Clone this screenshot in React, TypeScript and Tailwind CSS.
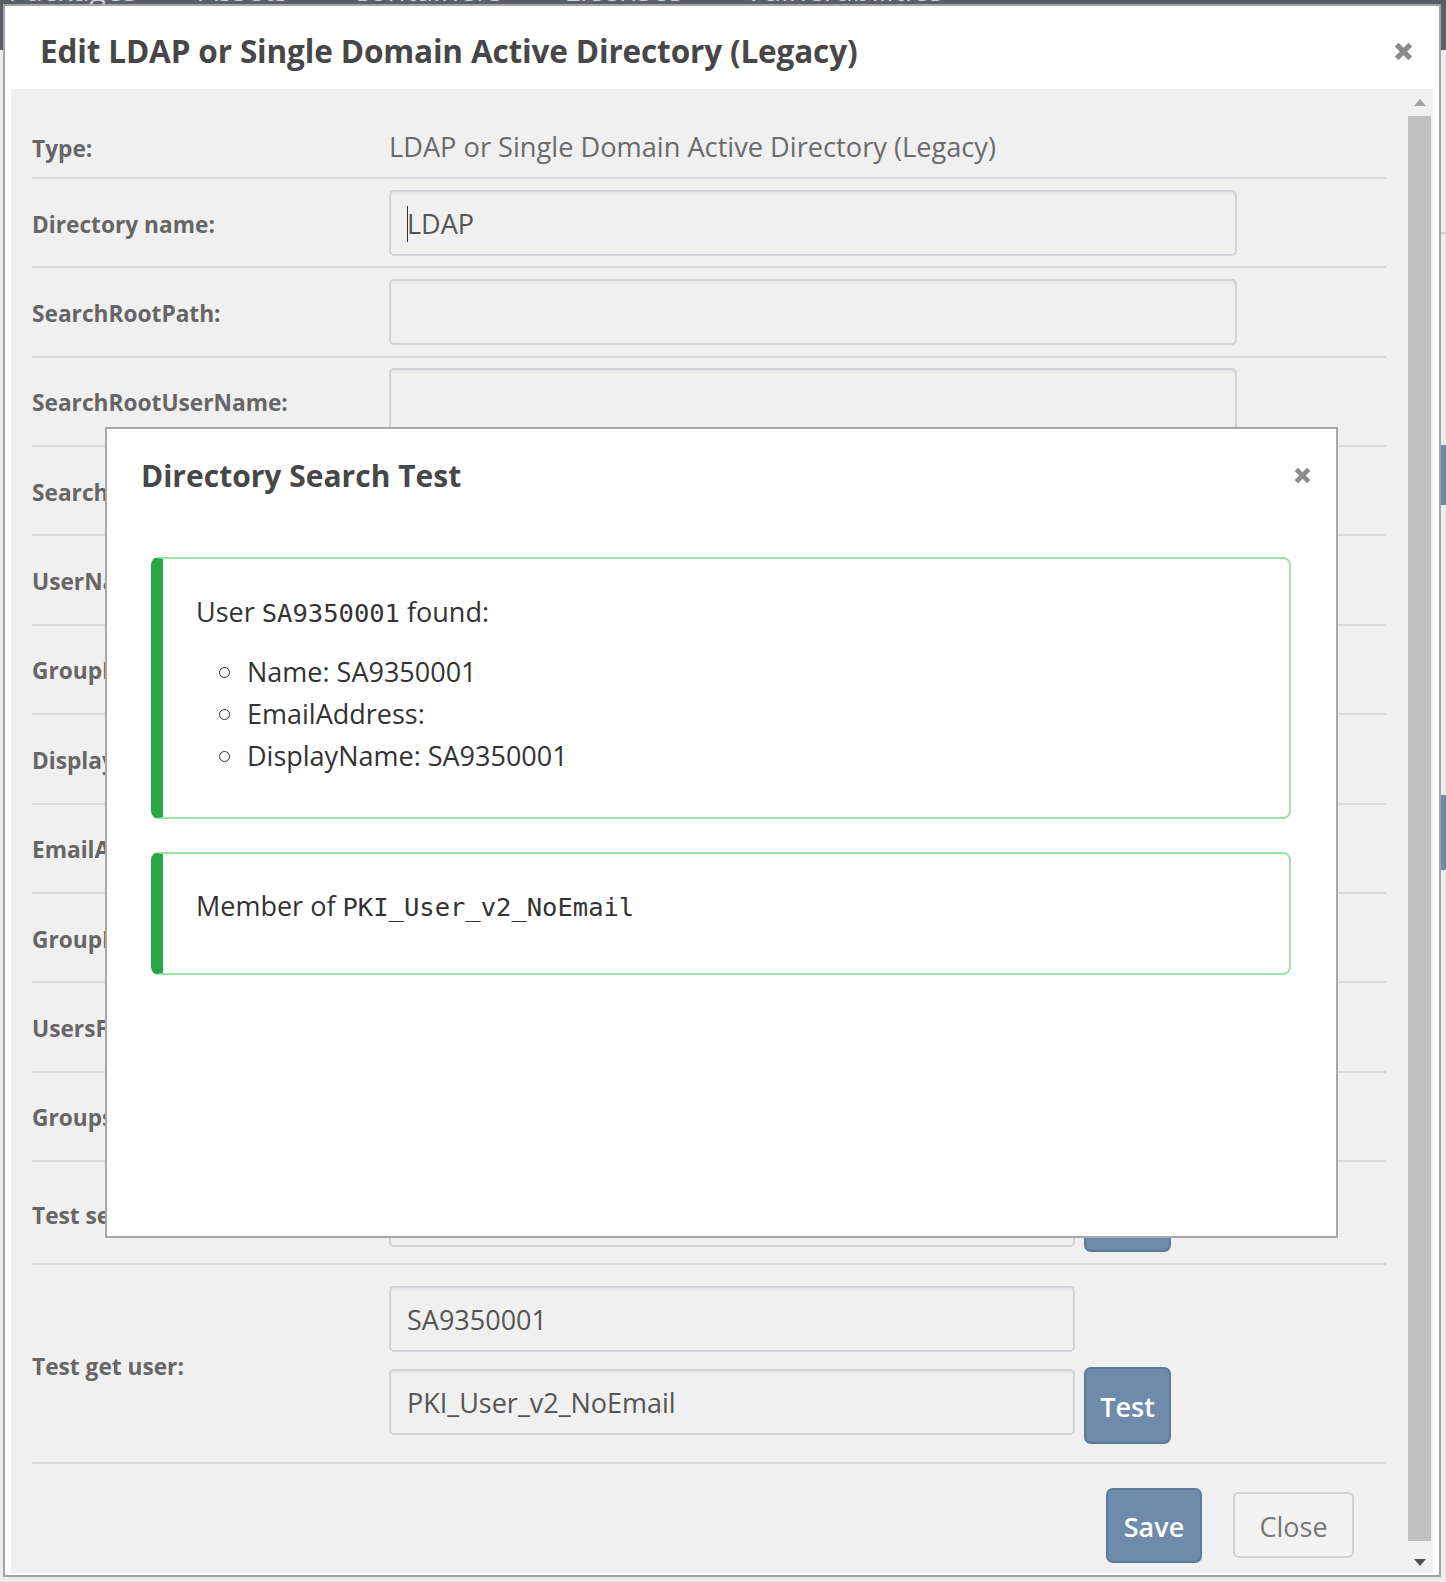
import React from "react";

const labelCls =
  "w-[357px] shrink-0 pt-[4px] text-[22.7px] font-bold text-[#666] leading-[32px] whitespace-nowrap";

const Field = ({ value, cursor, w = "w-[848px]", cls = "" }: { value?: string; cursor?: boolean; w?: string; cls?: string }) => (
  <div
    className={`${w} ${cls} h-[66px] shrink-0 rounded-[5px] border-2 border-[#d0d3d7] bg-[#f0f0f0] shadow-[inset_0_2px_3px_rgba(0,0,0,0.05)] pl-[16px] pt-[3px] flex items-center text-[27px] text-[#555]`}
  >
    {cursor && <span className="w-[1px] h-[36px] bg-[#333] mr-[-1px]" />}
    {value}
  </div>
);

const BlueButton = ({ label, cls }: { label: string; cls: string }) => (
  <button
    className={`${cls} shrink-0 rounded-[7px] border-2 border-[#5e7a9a] bg-[#6f8bab] pt-[3px] text-white text-[27px] font-semibold`}
  >
    {label}
  </button>
);

const CloseX = ({ size = 20 }: { size?: number }) => (
  <svg width={size} height={size} viewBox="0 0 20 20">
    <path d="M3.5 3.5 L16.5 16.5 M16.5 3.5 L3.5 16.5" stroke="#8b8b8b" strokeWidth="5" strokeLinecap="butt" />
  </svg>
);

const rows = [
  "Directory name:",
  "SearchRootPath:",
  "SearchRootUserName:",
  "SearchRootPassword:",
  "UserNameAttribute:",
  "GroupNameAttribute:",
  "DisplayNameAttribute:",
  "EmailAddressAttribute:",
  "GroupMemberAttribute:",
  "UsersFilter:",
  "GroupsFilter:",
];

export default function App() {
  return (
    <div className="relative w-[1446px] h-[1582px] overflow-hidden bg-[#ececec] font-['Open_Sans',sans-serif]">
      {/* page behind */}
      <div className="absolute left-0 top-0 w-full h-[50px] bg-[#5b5d69] overflow-hidden">
        <div className="absolute left-[8px] top-[-26px] flex gap-[62px] text-[30px] text-[#cfd0d6] leading-[32px] whitespace-nowrap">
          <span>Packages</span>
          <span>Assets</span>
          <span>Containers</span>
          <span>Licenses</span>
          <span>Vulnerabilities</span>
        </div>
      </div>
      <div className="absolute right-0 top-[232px] w-[6px] h-[2px] bg-[#cfcfcf]" />
      <div className="absolute right-0 top-[445px] w-[6px] h-[60px] bg-[#7089a8]" />
      <div className="absolute right-0 top-[795px] w-[6px] h-[75px] bg-[#7089a8]" />

      {/* outer modal */}
      <div className="absolute left-[3px] top-[4px] w-[1438px] h-[1573px] border-2 border-[#a3a3a3] bg-white flex flex-col">
        <div className="h-[83px] shrink-0 flex items-center justify-between pt-[7px] pl-[35px] pr-[25px]">
          <h1 className="text-[31.5px] font-bold text-[#474747] tracking-[-0.15px]">
            Edit LDAP or Single Domain Active Directory (Legacy)
          </h1>
          <CloseX size={21} />
        </div>
        <div className="flex-1 ml-[6px] mr-[6px] mb-[2px] bg-[#f0f0f0] flex">
          <div className="flex-1 pl-[21px] pr-[22px] pt-[25px] flex flex-col">
            <div className="flex items-center pt-[14px] pb-[11px] border-b-2 border-[#dadada]">
              <div className={labelCls}>Type:</div>
              <div className="text-[27.2px] leading-[38px] text-[#6b6b6b]">
                LDAP or Single Domain Active Directory (Legacy)
              </div>
            </div>
            {rows.map((r, i) => (
              <div key={r} className="h-[89.36px] shrink-0 flex items-center border-b-2 border-[#dadada]">
                <div className={labelCls}>{r}</div>
                <Field value={i === 0 ? "LDAP" : ""} cursor={i === 0} />
              </div>
            ))}
            <div className="flex items-center pt-[14px] pb-[11px] border-b-2 border-[#dadada]">
              <div className={labelCls}>Test search user:</div>
              <div className="flex items-center gap-[9px]">
                <Field w="w-[686px]" />
                <BlueButton label="Test" cls="w-[87px] h-[76px]" />
              </div>
            </div>
            <div className="flex items-center pt-[21px] pb-[18px] border-b-2 border-[#dadada]">
              <div className={labelCls}>Test get user:</div>
              <div className="flex flex-col gap-[15px]">
                <Field w="w-[686px]" value="SA9350001" />
                <div className="flex items-start gap-[9px]">
                  <Field w="w-[686px]" cls="mt-[2px]" value="PKI_User_v2_NoEmail" />
                  <BlueButton label="Test" cls="w-[87px] h-[77px]" />
                </div>
              </div>
            </div>
            <div className="flex items-center justify-end gap-[31px] pt-[24px] pr-[32px]">
              <BlueButton label="Save" cls="w-[96px] h-[75px]" />
              <button className="w-[121px] h-[66px] rounded-[6px] border-2 border-[#d2d2d2] bg-[#f2f2f2] pt-[3px] text-[27px] text-[#777]">
                Close
              </button>
            </div>
          </div>
          {/* scrollbar */}
          <div className="w-[25px] shrink-0 flex flex-col">
            <div className="h-[27px] flex items-center justify-center pr-[2px]">
              <svg width="12" height="7" viewBox="0 0 12 7">
                <path d="M0 7 L6 0 L12 7 Z" fill="#a3a3a3" />
              </svg>
            </div>
            <div className="flex-1 w-[23px] bg-[#c1c1c1]" />
            <div className="h-[32px] flex items-end justify-center pb-[7px] pr-[2px]">
              <svg width="12" height="7" viewBox="0 0 12 7">
                <path d="M0 0 L12 0 L6 7 Z" fill="#505050" />
              </svg>
            </div>
          </div>
        </div>
      </div>

      {/* inner modal */}
      <div className="absolute left-[105px] top-[427px] w-[1233px] h-[811px] border-2 border-[#a8a8a8] bg-white flex flex-col">
        <div className="h-[92px] shrink-0 flex items-center justify-between pl-[34px] pr-[24px]">
          <h2 className="text-[30px] font-bold text-[#474747]">Directory Search Test</h2>
          <CloseX size={19} />
        </div>
        <div className="pt-[36px] pl-[44px] pr-[45px] flex flex-col gap-[33px] text-[27px] text-[#333]">
          <div className="h-[262px] rounded-[8px] border-2 border-l-[12px] border-[#9be3aa] border-l-[#28a745] pl-[33px] pt-[32px] leading-[42px]">
            <p className="mb-[17px]">
              User <span className="font-['DejaVu_Sans_Mono',monospace] text-[25.5px]">SA9350001</span> found:
            </p>
            <ul className="flex flex-col">
              {["Name: SA9350001", "EmailAddress:", "DisplayName: SA9350001"].map((t) => (
                <li key={t} className="flex items-center">
                  <span className="ml-[23px] mr-[17px] w-[11px] h-[11px] rounded-full border-[1.5px] border-[#333]" />
                  {t}
                </li>
              ))}
            </ul>
          </div>
          <div className="h-[123px] rounded-[8px] border-2 border-l-[12px] border-[#9be3aa] border-l-[#28a745] pl-[33px] pt-[31px] leading-[42px]">
            Member of <span className="font-['DejaVu_Sans_Mono',monospace] text-[25.5px]">PKI_User_v2_NoEmail</span>
          </div>
        </div>
      </div>
    </div>
  );
}
